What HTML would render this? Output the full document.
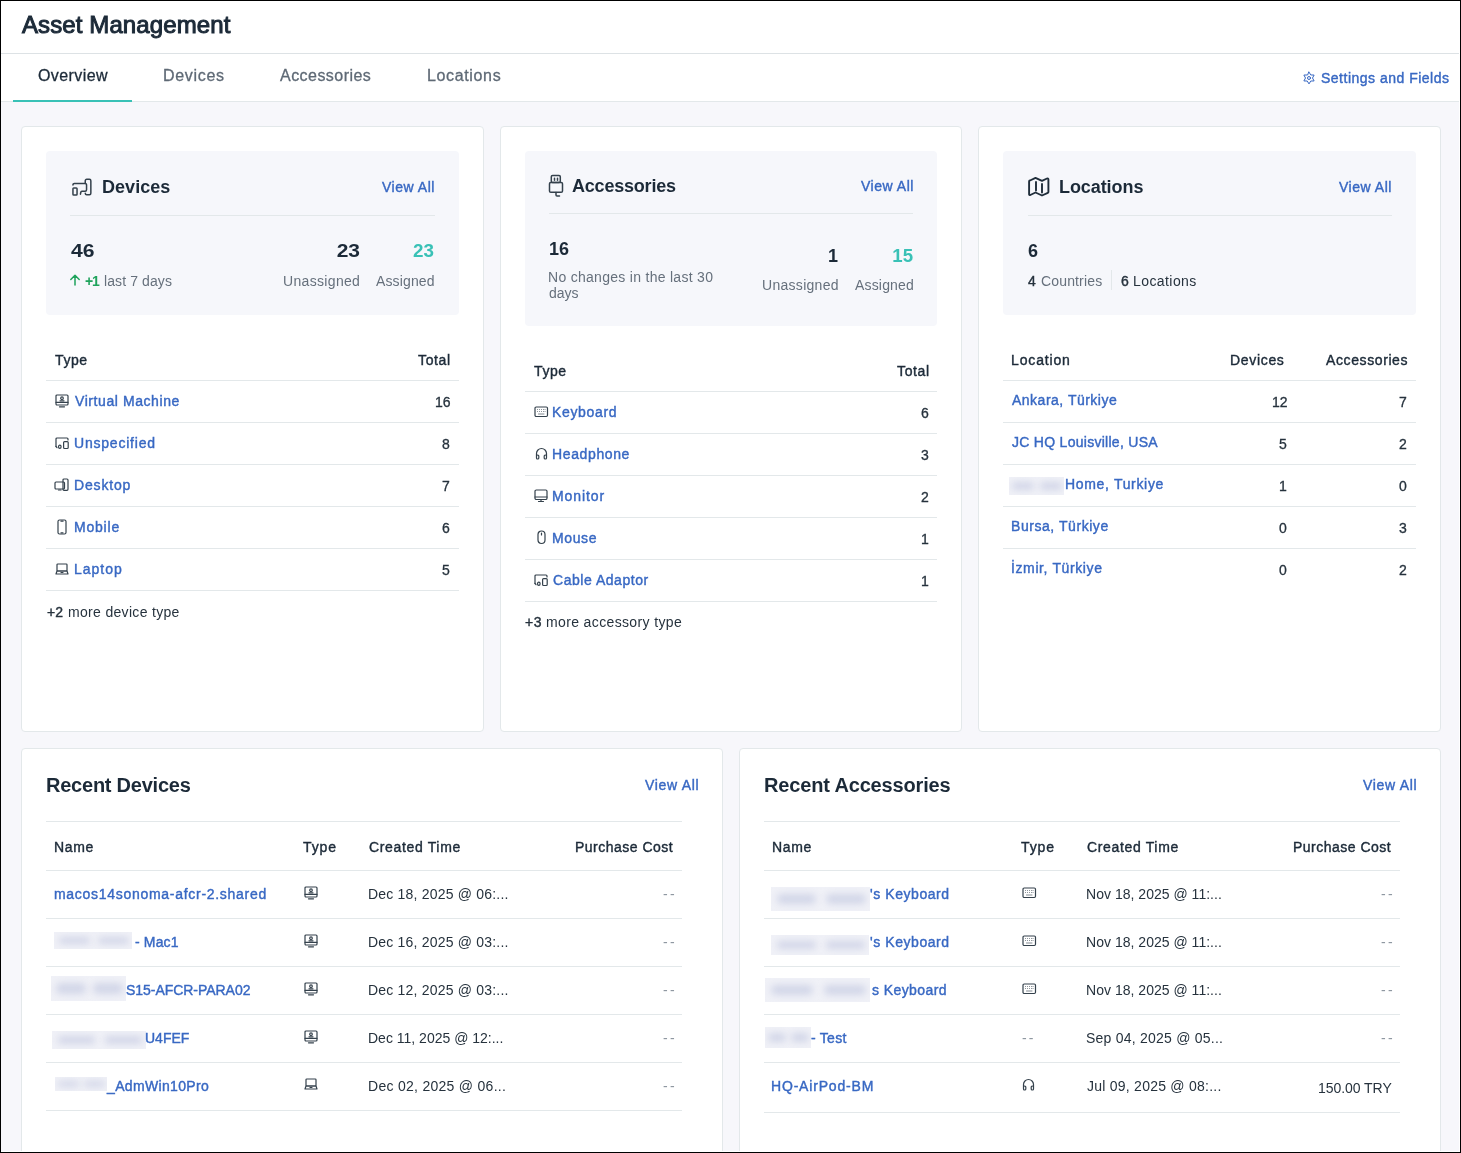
<!DOCTYPE html>
<html><head><meta charset="utf-8"><title>Asset Management</title>
<style>
html,body{margin:0;padding:0;}
body{width:1461px;height:1153px;position:relative;overflow:hidden;background:#f7f7fb;font-family:"Liberation Sans",sans-serif;}
.t{position:absolute;white-space:nowrap;line-height:20px;will-change:transform;}
</style></head><body>
<div style="position:absolute;left:0px;top:0px;width:1461px;height:53px;background:#fff"></div>
<div style="position:absolute;left:0px;top:53px;width:1461px;height:1px;background:#dde2e5"></div>
<div style="position:absolute;left:0px;top:54px;width:1461px;height:47px;background:#fff"></div>
<div style="position:absolute;left:0px;top:101px;width:1461px;height:1px;background:#e3e8ea"></div>
<div style="position:absolute;left:0px;top:102px;width:1461px;height:1051px;background:#f7f7fb"></div>
<div class="t" style="left:22.20px;top:15px;font-size:24px;font-weight:400;color:#1c2a38;-webkit-text-stroke:1.0px #1c2a38;letter-spacing:0.102px;">Asset Management</div>
<div class="t" style="left:37.80px;top:66px;font-size:16px;font-weight:400;color:#1c2a38;-webkit-text-stroke:0.3px #1c2a38;letter-spacing:0.401px;">Overview</div>
<div class="t" style="left:163.20px;top:66px;font-size:16px;font-weight:400;color:#5e6975;-webkit-text-stroke:0.3px #5e6975;letter-spacing:0.675px;">Devices</div>
<div class="t" style="left:280.40px;top:66px;font-size:16px;font-weight:400;color:#5e6975;-webkit-text-stroke:0.3px #5e6975;letter-spacing:0.459px;">Accessories</div>
<div class="t" style="left:427.20px;top:66px;font-size:16px;font-weight:400;color:#5e6975;-webkit-text-stroke:0.3px #5e6975;letter-spacing:0.645px;">Locations</div>
<div style="position:absolute;left:13px;top:100px;width:119px;height:2px;background:#39c1b6"></div>
<svg style="position:absolute;left:1302px;top:71px" width="14" height="14" viewBox="0 0 14 14" fill="none" stroke="#3868c3" stroke-width="1.0" stroke-linecap="round" stroke-linejoin="round"><circle cx="7" cy="7" r="1.5"/><path d="M7.00 1.10 L8.75 3.97 L12.11 4.05 L10.50 7.00 L12.11 9.95 L8.75 10.03 L7.00 12.90 L5.25 10.03 L1.89 9.95 L3.50 7.00 L1.89 4.05 L5.25 3.97z"/></svg>
<div class="t" style="left:1320.70px;top:68px;font-size:14px;font-weight:400;color:#3868c3;-webkit-text-stroke:0.4px #3868c3;letter-spacing:0.495px;">Settings and Fields</div>
<div style="position:absolute;left:21px;top:126px;width:463px;height:606px;background:#fff;border:1px solid #e3e8ea;border-radius:4px;box-sizing:border-box"></div>
<div style="position:absolute;left:500px;top:126px;width:462px;height:606px;background:#fff;border:1px solid #e3e8ea;border-radius:4px;box-sizing:border-box"></div>
<div style="position:absolute;left:978px;top:126px;width:463px;height:606px;background:#fff;border:1px solid #e3e8ea;border-radius:4px;box-sizing:border-box"></div>
<div style="position:absolute;left:46px;top:151px;width:413px;height:164px;background:#f6f7fb;border-radius:4px"></div>
<svg style="position:absolute;left:70px;top:176px" width="24" height="22" viewBox="0 0 24 22" fill="none" stroke="#34414c" stroke-width="1.5" stroke-linecap="round" stroke-linejoin="round"><rect x="2.95" y="12.05" width="4.1" height="6.9" rx="0.8"/><path d="M2.95 9.1V8.9a1.45 1.45 0 0 1 1.45-1.45h10.7a1.45 1.45 0 0 1 1.45 1.45v4.9a1.45 1.45 0 0 1-1.45 1.45h-3.2q-.9 0-1.1 1l-.35 1.9"/><path d="M15.25 7V4.7a1.45 1.45 0 0 1 1.45-1.45h2.7a1.45 1.45 0 0 1 1.45 1.45v12.5a1.45 1.45 0 0 1-1.45 1.45h-2.7a1.45 1.45 0 0 1-1.45-1.45"/></svg>
<div class="t" style="left:101.50px;top:177px;font-size:18px;font-weight:700;color:#1c2a38;letter-spacing:0.045px;">Devices</div>
<div class="t" style="right:1026.11px;top:177px;font-size:14px;font-weight:400;color:#3868c3;-webkit-text-stroke:0.4px #3868c3;letter-spacing:0.515px;">View All</div>
<div style="position:absolute;left:70px;top:215px;width:365px;height:1px;background:#e3e8ea"></div>
<div class="t" style="left:70.70px;top:241px;font-size:18px;font-weight:700;color:#1c2a38;transform:scaleX(1.1757);transform-origin:left center;">46</div>
<svg style="position:absolute;left:69px;top:274px" width="12" height="12" viewBox="0 0 12 12" fill="none" stroke="#1fa35c" stroke-width="1.5" stroke-linecap="round" stroke-linejoin="round"><path d="M6 11V1.5M1.8 5.5 6 1.3l4.2 4.2"/></svg>
<div class="t" style="left:84.70px;top:271px;font-size:14px;font-weight:700;color:#1fa35c;letter-spacing:-1.260px;">+1</div>
<div class="t" style="left:103.50px;top:271px;font-size:14px;font-weight:400;color:#66707c;letter-spacing:0.099px;">last 7 days</div>
<div class="t" style="right:1100.97px;top:241px;font-size:18px;font-weight:700;color:#1c2a38;transform:scaleX(1.1672);transform-origin:right center;">23</div>
<div class="t" style="right:1101.06px;top:271px;font-size:14px;font-weight:400;color:#66707c;letter-spacing:0.330px;">Unassigned</div>
<div class="t" style="right:1026.97px;top:241px;font-size:18px;font-weight:700;color:#39c1b6;transform:scaleX(1.0450);transform-origin:right center;">23</div>
<div class="t" style="right:1026.38px;top:271px;font-size:14px;font-weight:400;color:#66707c;letter-spacing:0.129px;">Assigned</div>
<div class="t" style="left:54.80px;top:350px;font-size:14px;font-weight:400;color:#1c2a38;-webkit-text-stroke:0.4px #1c2a38;letter-spacing:0.600px;">Type</div>
<div class="t" style="right:1010.25px;top:350px;font-size:14px;font-weight:400;color:#1c2a38;-webkit-text-stroke:0.4px #1c2a38;letter-spacing:0.630px;">Total</div>
<div style="position:absolute;left:46px;top:380px;width:413px;height:1px;background:#e3e8ea"></div>
<svg style="position:absolute;left:55px;top:394px" width="14" height="14" viewBox="0 0 14 14" fill="none" stroke="#34414c" stroke-width="1.2" stroke-linecap="round" stroke-linejoin="round"><rect x="1" y="1" width="12" height="10" rx="1"/><path d="M1 8.3h12M4.5 12.8h5"/><circle cx="7" cy="4.2" r="1.3"/><path d="M5 6.8h4"/></svg>
<div class="t" style="left:74.70px;top:391px;font-size:14px;font-weight:400;color:#3868c3;-webkit-text-stroke:0.4px #3868c3;letter-spacing:0.577px;">Virtual Machine</div>
<div class="t" style="right:1010.62px;top:392px;font-size:14px;font-weight:400;color:#26323d;-webkit-text-stroke:0.3px #26323d;">16</div>
<div style="position:absolute;left:46px;top:422px;width:413px;height:1px;background:#e3e8ea"></div>
<svg style="position:absolute;left:55px;top:437px" width="14" height="13" viewBox="0 0 14 13" fill="none" stroke="#34414c" stroke-width="1.2" stroke-linecap="round" stroke-linejoin="round"><path d="M1 9.5V2a1 1 0 0 1 1-1h10a1 1 0 0 1 1 1v1"/><path d="M1 9.5l1 1.2"/><ellipse cx="4.8" cy="9.8" rx="1.3" ry="1.6"/><rect x="8.6" y="4.6" width="4.6" height="6.9" rx="1"/></svg>
<div class="t" style="left:73.70px;top:433px;font-size:14px;font-weight:400;color:#3868c3;-webkit-text-stroke:0.4px #3868c3;letter-spacing:0.783px;">Unspecified</div>
<div class="t" style="right:1011.40px;top:434px;font-size:14px;font-weight:400;color:#26323d;-webkit-text-stroke:0.3px #26323d;">8</div>
<div style="position:absolute;left:46px;top:464px;width:413px;height:1px;background:#e3e8ea"></div>
<svg style="position:absolute;left:54px;top:478px" width="15" height="13" viewBox="0 0 15 13" fill="none" stroke="#34414c" stroke-width="1.2" stroke-linecap="round" stroke-linejoin="round"><rect x="1" y="4" width="9.5" height="7" rx="1"/><path d="M4.5 12h2.5"/><rect x="9" y="1" width="5" height="11.3" rx="1"/></svg>
<div class="t" style="left:73.70px;top:475px;font-size:14px;font-weight:400;color:#3868c3;-webkit-text-stroke:0.4px #3868c3;letter-spacing:0.840px;">Desktop</div>
<div class="t" style="right:1011.40px;top:476px;font-size:14px;font-weight:400;color:#26323d;-webkit-text-stroke:0.3px #26323d;">7</div>
<div style="position:absolute;left:46px;top:506px;width:413px;height:1px;background:#e3e8ea"></div>
<svg style="position:absolute;left:55px;top:519px" width="14" height="16" viewBox="0 0 14 16" fill="none" stroke="#34414c" stroke-width="1.2" stroke-linecap="round" stroke-linejoin="round"><rect x="3" y="1" width="8" height="14" rx="1.5"/><path d="M6 2.2h2M6 13.8h2"/></svg>
<div class="t" style="left:73.70px;top:517px;font-size:14px;font-weight:400;color:#3868c3;-webkit-text-stroke:0.4px #3868c3;letter-spacing:0.792px;">Mobile</div>
<div class="t" style="right:1011.40px;top:518px;font-size:14px;font-weight:400;color:#26323d;-webkit-text-stroke:0.3px #26323d;">6</div>
<div style="position:absolute;left:46px;top:548px;width:413px;height:1px;background:#e3e8ea"></div>
<svg style="position:absolute;left:55px;top:563px" width="14" height="12" viewBox="0 0 14 12" fill="none" stroke="#34414c" stroke-width="1.2" stroke-linecap="round" stroke-linejoin="round"><rect x="2" y="1" width="10" height="7" rx="0.8"/><path d="M1 11l1-3h10l1 3z M6 9.5h2"/></svg>
<div class="t" style="left:73.70px;top:559px;font-size:14px;font-weight:400;color:#3868c3;-webkit-text-stroke:0.4px #3868c3;letter-spacing:0.972px;">Laptop</div>
<div class="t" style="right:1011.40px;top:560px;font-size:14px;font-weight:400;color:#26323d;-webkit-text-stroke:0.3px #26323d;">5</div>
<div style="position:absolute;left:46px;top:590px;width:413px;height:1px;background:#e3e8ea"></div>
<div class="t" style="left:46.70px;top:602px;font-size:14px;font-weight:400;color:#26323d;-webkit-text-stroke:0.4px #26323d;letter-spacing:0.180px;">+2</div>
<div class="t" style="left:67.50px;top:602px;font-size:14px;font-weight:400;color:#26323d;letter-spacing:0.318px;">more device type</div>
<div style="position:absolute;left:525px;top:151px;width:412px;height:175px;background:#f6f7fb;border-radius:4px"></div>
<svg style="position:absolute;left:547px;top:173px" width="18" height="25" viewBox="0 0 18 25" fill="none" stroke="#34414c" stroke-width="1.5" stroke-linecap="round" stroke-linejoin="round"><rect x="4.3" y="2.5" width="9" height="7" rx="1.3"/><path d="M7.5 5.2v2M10.5 5.2v2"/><rect x="2.5" y="9.5" width="13" height="9.8" rx="1.3"/><path d="M9 19.5v2.5a1 1 0 0 0 1 1h2.5"/></svg>
<div class="t" style="left:571.70px;top:176px;font-size:18px;font-weight:700;color:#1c2a38;letter-spacing:-0.207px;">Accessories</div>
<div class="t" style="right:547.11px;top:176px;font-size:14px;font-weight:400;color:#3868c3;-webkit-text-stroke:0.4px #3868c3;letter-spacing:0.515px;">View All</div>
<div style="position:absolute;left:549px;top:213px;width:364px;height:1px;background:#e3e8ea"></div>
<div class="t" style="left:548.50px;top:239px;font-size:18px;font-weight:700;color:#1c2a38;letter-spacing:0.090px;">16</div>
<div class="t" style="left:548.00px;top:267px;font-size:14px;font-weight:400;color:#66707c;letter-spacing:0.290px;">No changes in the last 30</div>
<div class="t" style="left:549.00px;top:283px;font-size:14px;font-weight:400;color:#66707c;">days</div>
<div class="t" style="right:623.38px;top:246px;font-size:18px;font-weight:700;color:#1c2a38;">1</div>
<div class="t" style="right:622.46px;top:275px;font-size:14px;font-weight:400;color:#66707c;letter-spacing:0.290px;">Unassigned</div>
<div class="t" style="right:547.97px;top:246px;font-size:18px;font-weight:700;color:#39c1b6;transform:scaleX(1.0349);transform-origin:right center;">15</div>
<div class="t" style="right:547.30px;top:275px;font-size:14px;font-weight:400;color:#66707c;letter-spacing:0.173px;">Assigned</div>
<div class="t" style="left:533.70px;top:361px;font-size:14px;font-weight:400;color:#1c2a38;-webkit-text-stroke:0.4px #1c2a38;letter-spacing:0.600px;">Type</div>
<div class="t" style="right:531.25px;top:361px;font-size:14px;font-weight:400;color:#1c2a38;-webkit-text-stroke:0.4px #1c2a38;letter-spacing:0.630px;">Total</div>
<div style="position:absolute;left:525px;top:391px;width:412px;height:1px;background:#e3e8ea"></div>
<svg style="position:absolute;left:534px;top:406px" width="15" height="12" viewBox="0 0 15 12" fill="none" stroke="#34414c" stroke-width="1.2" stroke-linecap="round" stroke-linejoin="round"><rect x="1" y="1" width="12.5" height="9.5" rx="1.2"/><path stroke-width="0.9" opacity="0.7" d="M3.5 3.5h.1M5.5 3.5h.1M7.5 3.5h.1M9.5 3.5h.1M11 3.5h.1M3.5 5.5h.1M5.5 5.5h.1M7.5 5.5h.1M9.5 5.5h.1M11 5.5h.1M4.5 8h5.5"/></svg>
<div class="t" style="left:552.30px;top:402px;font-size:14px;font-weight:400;color:#3868c3;-webkit-text-stroke:0.4px #3868c3;letter-spacing:0.656px;">Keyboard</div>
<div class="t" style="right:532.40px;top:403px;font-size:14px;font-weight:400;color:#26323d;-webkit-text-stroke:0.3px #26323d;">6</div>
<div style="position:absolute;left:525px;top:433px;width:412px;height:1px;background:#e3e8ea"></div>
<svg style="position:absolute;left:535px;top:447px" width="13" height="13" viewBox="0 0 13 13" fill="none" stroke="#34414c" stroke-width="1.2" stroke-linecap="round" stroke-linejoin="round"><path d="M1.5 9V6.5a5 5 0 0 1 10 0V9"/><rect x="1.5" y="8" width="2.3" height="4" rx="1"/><rect x="9.2" y="8" width="2.3" height="4" rx="1"/></svg>
<div class="t" style="left:552.30px;top:444px;font-size:14px;font-weight:400;color:#3868c3;-webkit-text-stroke:0.4px #3868c3;letter-spacing:0.626px;">Headphone</div>
<div class="t" style="right:532.40px;top:445px;font-size:14px;font-weight:400;color:#26323d;-webkit-text-stroke:0.3px #26323d;">3</div>
<div style="position:absolute;left:525px;top:475px;width:412px;height:1px;background:#e3e8ea"></div>
<svg style="position:absolute;left:534px;top:489px" width="14" height="14" viewBox="0 0 14 14" fill="none" stroke="#34414c" stroke-width="1.2" stroke-linecap="round" stroke-linejoin="round"><rect x="1" y="1" width="12" height="9.5" rx="1.3"/><path d="M1 8h12M4.5 12.5h5M7 10.5v2"/></svg>
<div class="t" style="left:552.30px;top:486px;font-size:14px;font-weight:400;color:#3868c3;-webkit-text-stroke:0.4px #3868c3;letter-spacing:0.900px;">Monitor</div>
<div class="t" style="right:532.40px;top:487px;font-size:14px;font-weight:400;color:#26323d;-webkit-text-stroke:0.3px #26323d;">2</div>
<div style="position:absolute;left:525px;top:517px;width:412px;height:1px;background:#e3e8ea"></div>
<svg style="position:absolute;left:537px;top:530px" width="9" height="15" viewBox="0 0 9 15" fill="none" stroke="#34414c" stroke-width="1.2" stroke-linecap="round" stroke-linejoin="round"><rect x="1" y="1" width="7" height="12.5" rx="3.5"/><path d="M4.5 3v2"/></svg>
<div class="t" style="left:552.30px;top:528px;font-size:14px;font-weight:400;color:#3868c3;-webkit-text-stroke:0.4px #3868c3;letter-spacing:0.618px;">Mouse</div>
<div class="t" style="right:532.40px;top:529px;font-size:14px;font-weight:400;color:#26323d;-webkit-text-stroke:0.3px #26323d;">1</div>
<div style="position:absolute;left:525px;top:559px;width:412px;height:1px;background:#e3e8ea"></div>
<svg style="position:absolute;left:534px;top:574px" width="14" height="13" viewBox="0 0 14 13" fill="none" stroke="#34414c" stroke-width="1.2" stroke-linecap="round" stroke-linejoin="round"><path d="M1 9.5V2a1 1 0 0 1 1-1h10a1 1 0 0 1 1 1v1"/><path d="M1 9.5l1 1.2"/><ellipse cx="4.8" cy="9.8" rx="1.3" ry="1.6"/><rect x="8.6" y="4.6" width="4.6" height="6.9" rx="1"/></svg>
<div class="t" style="left:553.30px;top:570px;font-size:14px;font-weight:400;color:#3868c3;-webkit-text-stroke:0.4px #3868c3;letter-spacing:0.537px;">Cable Adaptor</div>
<div class="t" style="right:532.40px;top:571px;font-size:14px;font-weight:400;color:#26323d;-webkit-text-stroke:0.3px #26323d;">1</div>
<div style="position:absolute;left:525px;top:601px;width:412px;height:1px;background:#e3e8ea"></div>
<div class="t" style="left:525.20px;top:612px;font-size:14px;font-weight:400;color:#26323d;-webkit-text-stroke:0.4px #26323d;letter-spacing:0.630px;">+3</div>
<div class="t" style="left:546.00px;top:612px;font-size:14px;font-weight:400;color:#26323d;letter-spacing:0.365px;">more accessory type</div>
<div style="position:absolute;left:1003px;top:151px;width:413px;height:164px;background:#f6f7fb;border-radius:4px"></div>
<svg style="position:absolute;left:1027px;top:175px" width="24" height="23" viewBox="0 0 24 23" fill="none" stroke="#1f2d3a" stroke-width="1.9" stroke-linecap="round" stroke-linejoin="round"><path d="M3 5.5l5.5-2.6 6.5 3 5-2.4a1 1 0 0 1 1.4.9v12.5a1 1 0 0 1-.6.9l-5.8 2.7-6.5-3-5.2 2.5a.8.8 0 0 1-1.2-.7V6.5a1 1 0 0 1 .9-1z"/><path d="M9 7v8.5M15 9v8.5"/></svg>
<div class="t" style="left:1058.50px;top:177px;font-size:18px;font-weight:700;color:#1c2a38;letter-spacing:-0.077px;">Locations</div>
<div class="t" style="right:68.71px;top:177px;font-size:14px;font-weight:400;color:#3868c3;-webkit-text-stroke:0.4px #3868c3;letter-spacing:0.515px;">View All</div>
<div style="position:absolute;left:1028px;top:215px;width:364px;height:1px;background:#e3e8ea"></div>
<div class="t" style="left:1028.00px;top:241px;font-size:18px;font-weight:700;color:#1c2a38;">6</div>
<div class="t" style="left:1027.60px;top:271px;font-size:14px;font-weight:400;color:#26323d;-webkit-text-stroke:0.4px #26323d;">4</div>
<div class="t" style="left:1040.90px;top:271px;font-size:14px;font-weight:400;color:#66707c;letter-spacing:0.153px;">Countries</div>
<div style="position:absolute;left:1111px;top:270px;width:1px;height:20px;background:#e3e8ea"></div>
<div class="t" style="left:1120.50px;top:271px;font-size:14px;font-weight:400;color:#26323d;-webkit-text-stroke:0.4px #26323d;">6</div>
<div class="t" style="left:1132.50px;top:271px;font-size:14px;font-weight:400;color:#26323d;letter-spacing:0.420px;">Locations</div>
<div class="t" style="left:1010.60px;top:350px;font-size:14px;font-weight:400;color:#1c2a38;-webkit-text-stroke:0.4px #1c2a38;letter-spacing:0.853px;">Location</div>
<div class="t" style="right:176.50px;top:350px;font-size:14px;font-weight:400;color:#1c2a38;-webkit-text-stroke:0.4px #1c2a38;letter-spacing:0.675px;">Devices</div>
<div class="t" style="right:52.59px;top:350px;font-size:14px;font-weight:400;color:#1c2a38;-webkit-text-stroke:0.4px #1c2a38;letter-spacing:0.603px;">Accessories</div>
<div style="position:absolute;left:1003px;top:380px;width:413px;height:1px;background:#e3e8ea"></div>
<div class="t" style="left:1011.60px;top:390px;font-size:14px;font-weight:400;color:#3868c3;-webkit-text-stroke:0.4px #3868c3;letter-spacing:0.499px;">Ankara, Türkiye</div>
<div class="t" style="right:173.22px;top:392px;font-size:14px;font-weight:400;color:#26323d;-webkit-text-stroke:0.3px #26323d;">12</div>
<div class="t" style="right:53.90px;top:392px;font-size:14px;font-weight:400;color:#26323d;-webkit-text-stroke:0.3px #26323d;">7</div>
<div style="position:absolute;left:1003px;top:422px;width:413px;height:1px;background:#e3e8ea"></div>
<div class="t" style="left:1011.60px;top:432px;font-size:14px;font-weight:400;color:#3868c3;-webkit-text-stroke:0.4px #3868c3;letter-spacing:0.279px;">JC HQ Louisville, USA</div>
<div class="t" style="right:174.00px;top:434px;font-size:14px;font-weight:400;color:#26323d;-webkit-text-stroke:0.3px #26323d;">5</div>
<div class="t" style="right:53.90px;top:434px;font-size:14px;font-weight:400;color:#26323d;-webkit-text-stroke:0.3px #26323d;">2</div>
<div style="position:absolute;left:1003px;top:464px;width:413px;height:1px;background:#e3e8ea"></div>
<div style="position:absolute;left:1009px;top:477px;width:55px;height:18px;overflow:hidden;background:#f0f1f7"><div style="position:absolute;left:3.3px;width:22.0px;top:5.0px;height:7.9px;background:#d2d6e8;filter:blur(3.5px);border-radius:5px"></div><div style="position:absolute;left:30.8px;width:22.0px;top:5.0px;height:7.9px;background:#d2d6e8;filter:blur(3.5px);border-radius:5px"></div></div>
<div class="t" style="left:1065.40px;top:474px;font-size:14px;font-weight:400;color:#3868c3;-webkit-text-stroke:0.4px #3868c3;letter-spacing:0.675px;">Home, Turkiye</div>
<div class="t" style="right:174.00px;top:476px;font-size:14px;font-weight:400;color:#26323d;-webkit-text-stroke:0.3px #26323d;">1</div>
<div class="t" style="right:53.90px;top:476px;font-size:14px;font-weight:400;color:#26323d;-webkit-text-stroke:0.3px #26323d;">0</div>
<div style="position:absolute;left:1003px;top:506px;width:413px;height:1px;background:#e3e8ea"></div>
<div class="t" style="left:1010.60px;top:516px;font-size:14px;font-weight:400;color:#3868c3;-webkit-text-stroke:0.4px #3868c3;letter-spacing:0.554px;">Bursa, Türkiye</div>
<div class="t" style="right:174.00px;top:518px;font-size:14px;font-weight:400;color:#26323d;-webkit-text-stroke:0.3px #26323d;">0</div>
<div class="t" style="right:53.90px;top:518px;font-size:14px;font-weight:400;color:#26323d;-webkit-text-stroke:0.3px #26323d;">3</div>
<div style="position:absolute;left:1003px;top:548px;width:413px;height:1px;background:#e3e8ea"></div>
<div class="t" style="left:1010.60px;top:558px;font-size:14px;font-weight:400;color:#3868c3;-webkit-text-stroke:0.4px #3868c3;letter-spacing:0.614px;">İzmir, Türkiye</div>
<div class="t" style="right:174.00px;top:560px;font-size:14px;font-weight:400;color:#26323d;-webkit-text-stroke:0.3px #26323d;">0</div>
<div class="t" style="right:53.90px;top:560px;font-size:14px;font-weight:400;color:#26323d;-webkit-text-stroke:0.3px #26323d;">2</div>
<div style="position:absolute;left:21px;top:748px;width:702px;height:420px;background:#fff;border:1px solid #e3e8ea;border-radius:4px;box-sizing:border-box"></div>
<div style="position:absolute;left:739px;top:748px;width:702px;height:420px;background:#fff;border:1px solid #e3e8ea;border-radius:4px;box-sizing:border-box"></div>
<div class="t" style="left:45.80px;top:775px;font-size:20px;font-weight:700;color:#1c2a38;letter-spacing:-0.233px;">Recent Devices</div>
<div class="t" style="right:761.82px;top:775px;font-size:14px;font-weight:400;color:#3868c3;-webkit-text-stroke:0.4px #3868c3;letter-spacing:0.687px;">View All</div>
<div style="position:absolute;left:46px;top:821px;width:636px;height:1px;background:#e3e8ea"></div>
<div class="t" style="left:53.70px;top:837px;font-size:14px;font-weight:400;color:#1c2a38;-webkit-text-stroke:0.4px #1c2a38;letter-spacing:0.630px;">Name</div>
<div class="t" style="left:303.00px;top:837px;font-size:14px;font-weight:400;color:#1c2a38;-webkit-text-stroke:0.4px #1c2a38;letter-spacing:0.900px;">Type</div>
<div class="t" style="left:369.00px;top:837px;font-size:14px;font-weight:400;color:#1c2a38;-webkit-text-stroke:0.4px #1c2a38;letter-spacing:0.655px;">Created Time</div>
<div class="t" style="right:787.36px;top:837px;font-size:14px;font-weight:400;color:#1c2a38;-webkit-text-stroke:0.4px #1c2a38;letter-spacing:0.487px;">Purchase Cost</div>
<div style="position:absolute;left:46px;top:870px;width:636px;height:1px;background:#e3e8ea"></div>
<div class="t" style="left:54.40px;top:884px;font-size:14px;font-weight:400;color:#3868c3;-webkit-text-stroke:0.4px #3868c3;letter-spacing:0.710px;">macos14sonoma-afcr-2.shared</div>
<svg style="position:absolute;left:304px;top:886px" width="14" height="14" viewBox="0 0 14 14" fill="none" stroke="#34414c" stroke-width="1.2" stroke-linecap="round" stroke-linejoin="round"><rect x="1" y="1" width="12" height="10" rx="1"/><path d="M1 8.3h12M4.5 12.8h5"/><circle cx="7" cy="4.2" r="1.3"/><path d="M5 6.8h4"/></svg>
<div class="t" style="left:368.00px;top:884px;font-size:14px;font-weight:400;color:#26323d;letter-spacing:0.202px;">Dec 18, 2025 @ 06:...</div>
<div class="t" style="right:784.27px;top:884px;font-size:14px;font-weight:400;color:#8f98a1;letter-spacing:2.250px;">--</div>
<div style="position:absolute;left:46px;top:918px;width:636px;height:1px;background:#e3e8ea"></div>
<div style="position:absolute;left:54px;top:932px;width:78px;height:17px;overflow:hidden;background:#f0f1f7"><div style="position:absolute;left:4.7px;width:31.2px;top:4.8px;height:7.5px;background:#d2d6e8;filter:blur(3.5px);border-radius:5px"></div><div style="position:absolute;left:43.7px;width:31.2px;top:4.8px;height:7.5px;background:#d2d6e8;filter:blur(3.5px);border-radius:5px"></div></div>
<div class="t" style="left:135.20px;top:932px;font-size:14px;font-weight:400;color:#3868c3;-webkit-text-stroke:0.4px #3868c3;letter-spacing:0.144px;">- Mac1</div>
<svg style="position:absolute;left:304px;top:934px" width="14" height="14" viewBox="0 0 14 14" fill="none" stroke="#34414c" stroke-width="1.2" stroke-linecap="round" stroke-linejoin="round"><rect x="1" y="1" width="12" height="10" rx="1"/><path d="M1 8.3h12M4.5 12.8h5"/><circle cx="7" cy="4.2" r="1.3"/><path d="M5 6.8h4"/></svg>
<div class="t" style="left:368.00px;top:932px;font-size:14px;font-weight:400;color:#26323d;letter-spacing:0.202px;">Dec 16, 2025 @ 03:...</div>
<div class="t" style="right:784.27px;top:932px;font-size:14px;font-weight:400;color:#8f98a1;letter-spacing:2.250px;">--</div>
<div style="position:absolute;left:46px;top:966px;width:636px;height:1px;background:#e3e8ea"></div>
<div style="position:absolute;left:51px;top:976px;width:75px;height:25px;overflow:hidden;background:#f0f1f7"><div style="position:absolute;left:4.5px;width:30.0px;top:7.0px;height:11.0px;background:#d2d6e8;filter:blur(3.5px);border-radius:5px"></div><div style="position:absolute;left:42.0px;width:30.0px;top:7.0px;height:11.0px;background:#d2d6e8;filter:blur(3.5px);border-radius:5px"></div></div>
<div class="t" style="left:125.50px;top:980px;font-size:14px;font-weight:400;color:#3868c3;-webkit-text-stroke:0.4px #3868c3;letter-spacing:-0.039px;">S15-AFCR-PARA02</div>
<svg style="position:absolute;left:304px;top:982px" width="14" height="14" viewBox="0 0 14 14" fill="none" stroke="#34414c" stroke-width="1.2" stroke-linecap="round" stroke-linejoin="round"><rect x="1" y="1" width="12" height="10" rx="1"/><path d="M1 8.3h12M4.5 12.8h5"/><circle cx="7" cy="4.2" r="1.3"/><path d="M5 6.8h4"/></svg>
<div class="t" style="left:368.00px;top:980px;font-size:14px;font-weight:400;color:#26323d;letter-spacing:0.202px;">Dec 12, 2025 @ 03:...</div>
<div class="t" style="right:784.27px;top:980px;font-size:14px;font-weight:400;color:#8f98a1;letter-spacing:2.250px;">--</div>
<div style="position:absolute;left:46px;top:1014px;width:636px;height:1px;background:#e3e8ea"></div>
<div style="position:absolute;left:52px;top:1031px;width:94px;height:18px;overflow:hidden;background:#f0f1f7"><div style="position:absolute;left:5.6px;width:37.6px;top:5.0px;height:7.9px;background:#d2d6e8;filter:blur(3.5px);border-radius:5px"></div><div style="position:absolute;left:52.6px;width:37.6px;top:5.0px;height:7.9px;background:#d2d6e8;filter:blur(3.5px);border-radius:5px"></div></div>
<div class="t" style="left:145.40px;top:1028px;font-size:14px;font-weight:400;color:#3868c3;-webkit-text-stroke:0.4px #3868c3;">U4FEF</div>
<svg style="position:absolute;left:304px;top:1030px" width="14" height="14" viewBox="0 0 14 14" fill="none" stroke="#34414c" stroke-width="1.2" stroke-linecap="round" stroke-linejoin="round"><rect x="1" y="1" width="12" height="10" rx="1"/><path d="M1 8.3h12M4.5 12.8h5"/><circle cx="7" cy="4.2" r="1.3"/><path d="M5 6.8h4"/></svg>
<div class="t" style="left:368.00px;top:1028px;font-size:14px;font-weight:400;color:#26323d;">Dec 11, 2025 @ 12:...</div>
<div class="t" style="right:784.27px;top:1028px;font-size:14px;font-weight:400;color:#8f98a1;letter-spacing:2.250px;">--</div>
<div style="position:absolute;left:46px;top:1062px;width:636px;height:1px;background:#e3e8ea"></div>
<div style="position:absolute;left:55px;top:1077px;width:52px;height:14px;overflow:hidden;background:#f0f1f7"><div style="position:absolute;left:3.1px;width:20.8px;top:3.9px;height:6.2px;background:#d2d6e8;filter:blur(3.5px);border-radius:5px"></div><div style="position:absolute;left:29.1px;width:20.8px;top:3.9px;height:6.2px;background:#d2d6e8;filter:blur(3.5px);border-radius:5px"></div></div>
<div class="t" style="left:107.40px;top:1076px;font-size:14px;font-weight:400;color:#3868c3;-webkit-text-stroke:0.4px #3868c3;letter-spacing:0.339px;">_AdmWin10Pro</div>
<svg style="position:absolute;left:304px;top:1078px" width="14" height="12" viewBox="0 0 14 12" fill="none" stroke="#34414c" stroke-width="1.2" stroke-linecap="round" stroke-linejoin="round"><rect x="2" y="1" width="10" height="7" rx="0.8"/><path d="M1 11l1-3h10l1 3z M6 9.5h2"/></svg>
<div class="t" style="left:368.00px;top:1076px;font-size:14px;font-weight:400;color:#26323d;letter-spacing:0.284px;">Dec 02, 2025 @ 06...</div>
<div class="t" style="right:784.27px;top:1076px;font-size:14px;font-weight:400;color:#8f98a1;letter-spacing:2.250px;">--</div>
<div style="position:absolute;left:46px;top:1110px;width:636px;height:1px;background:#e3e8ea"></div>
<div class="t" style="left:763.80px;top:775px;font-size:20px;font-weight:700;color:#1c2a38;letter-spacing:-0.159px;">Recent Accessories</div>
<div class="t" style="right:43.82px;top:775px;font-size:14px;font-weight:400;color:#3868c3;-webkit-text-stroke:0.4px #3868c3;letter-spacing:0.687px;">View All</div>
<div style="position:absolute;left:764px;top:821px;width:636px;height:1px;background:#e3e8ea"></div>
<div class="t" style="left:771.70px;top:837px;font-size:14px;font-weight:400;color:#1c2a38;-webkit-text-stroke:0.4px #1c2a38;letter-spacing:0.630px;">Name</div>
<div class="t" style="left:1021.00px;top:837px;font-size:14px;font-weight:400;color:#1c2a38;-webkit-text-stroke:0.4px #1c2a38;letter-spacing:0.900px;">Type</div>
<div class="t" style="left:1087.00px;top:837px;font-size:14px;font-weight:400;color:#1c2a38;-webkit-text-stroke:0.4px #1c2a38;letter-spacing:0.655px;">Created Time</div>
<div class="t" style="right:69.36px;top:837px;font-size:14px;font-weight:400;color:#1c2a38;-webkit-text-stroke:0.4px #1c2a38;letter-spacing:0.487px;">Purchase Cost</div>
<div style="position:absolute;left:764px;top:870px;width:636px;height:1px;background:#e3e8ea"></div>
<div style="position:absolute;left:771px;top:887px;width:99px;height:24px;overflow:hidden;background:#f0f1f7"><div style="position:absolute;left:5.9px;width:39.6px;top:6.7px;height:10.6px;background:#d2d6e8;filter:blur(3.5px);border-radius:5px"></div><div style="position:absolute;left:55.4px;width:39.6px;top:6.7px;height:10.6px;background:#d2d6e8;filter:blur(3.5px);border-radius:5px"></div></div>
<div class="t" style="left:870.00px;top:884px;font-size:14px;font-weight:400;color:#3868c3;-webkit-text-stroke:0.4px #3868c3;letter-spacing:0.558px;">'s Keyboard</div>
<svg style="position:absolute;left:1022px;top:887px" width="15" height="12" viewBox="0 0 15 12" fill="none" stroke="#34414c" stroke-width="1.2" stroke-linecap="round" stroke-linejoin="round"><rect x="1" y="1" width="12.5" height="9.5" rx="1.2"/><path stroke-width="0.9" opacity="0.7" d="M3.5 3.5h.1M5.5 3.5h.1M7.5 3.5h.1M9.5 3.5h.1M11 3.5h.1M3.5 5.5h.1M5.5 5.5h.1M7.5 5.5h.1M9.5 5.5h.1M11 5.5h.1M4.5 8h5.5"/></svg>
<div class="t" style="left:1086.00px;top:884px;font-size:14px;font-weight:400;color:#26323d;letter-spacing:0.023px;">Nov 18, 2025 @ 11:...</div>
<div class="t" style="right:66.27px;top:884px;font-size:14px;font-weight:400;color:#8f98a1;letter-spacing:2.250px;">--</div>
<div style="position:absolute;left:764px;top:918px;width:636px;height:1px;background:#e3e8ea"></div>
<div style="position:absolute;left:771px;top:935px;width:98px;height:20px;overflow:hidden;background:#f0f1f7"><div style="position:absolute;left:5.9px;width:39.2px;top:5.6px;height:8.8px;background:#d2d6e8;filter:blur(3.5px);border-radius:5px"></div><div style="position:absolute;left:54.9px;width:39.2px;top:5.6px;height:8.8px;background:#d2d6e8;filter:blur(3.5px);border-radius:5px"></div></div>
<div class="t" style="left:870.00px;top:932px;font-size:14px;font-weight:400;color:#3868c3;-webkit-text-stroke:0.4px #3868c3;letter-spacing:0.558px;">'s Keyboard</div>
<svg style="position:absolute;left:1022px;top:935px" width="15" height="12" viewBox="0 0 15 12" fill="none" stroke="#34414c" stroke-width="1.2" stroke-linecap="round" stroke-linejoin="round"><rect x="1" y="1" width="12.5" height="9.5" rx="1.2"/><path stroke-width="0.9" opacity="0.7" d="M3.5 3.5h.1M5.5 3.5h.1M7.5 3.5h.1M9.5 3.5h.1M11 3.5h.1M3.5 5.5h.1M5.5 5.5h.1M7.5 5.5h.1M9.5 5.5h.1M11 5.5h.1M4.5 8h5.5"/></svg>
<div class="t" style="left:1086.00px;top:932px;font-size:14px;font-weight:400;color:#26323d;letter-spacing:0.023px;">Nov 18, 2025 @ 11:...</div>
<div class="t" style="right:66.27px;top:932px;font-size:14px;font-weight:400;color:#8f98a1;letter-spacing:2.250px;">--</div>
<div style="position:absolute;left:764px;top:966px;width:636px;height:1px;background:#e3e8ea"></div>
<div style="position:absolute;left:765px;top:978px;width:105px;height:24px;overflow:hidden;background:#f0f1f7"><div style="position:absolute;left:6.3px;width:42.0px;top:6.7px;height:10.6px;background:#d2d6e8;filter:blur(3.5px);border-radius:5px"></div><div style="position:absolute;left:58.8px;width:42.0px;top:6.7px;height:10.6px;background:#d2d6e8;filter:blur(3.5px);border-radius:5px"></div></div>
<div class="t" style="left:872.00px;top:980px;font-size:14px;font-weight:400;color:#3868c3;-webkit-text-stroke:0.4px #3868c3;letter-spacing:0.410px;">s Keyboard</div>
<svg style="position:absolute;left:1022px;top:983px" width="15" height="12" viewBox="0 0 15 12" fill="none" stroke="#34414c" stroke-width="1.2" stroke-linecap="round" stroke-linejoin="round"><rect x="1" y="1" width="12.5" height="9.5" rx="1.2"/><path stroke-width="0.9" opacity="0.7" d="M3.5 3.5h.1M5.5 3.5h.1M7.5 3.5h.1M9.5 3.5h.1M11 3.5h.1M3.5 5.5h.1M5.5 5.5h.1M7.5 5.5h.1M9.5 5.5h.1M11 5.5h.1M4.5 8h5.5"/></svg>
<div class="t" style="left:1086.00px;top:980px;font-size:14px;font-weight:400;color:#26323d;letter-spacing:0.023px;">Nov 18, 2025 @ 11:...</div>
<div class="t" style="right:66.27px;top:980px;font-size:14px;font-weight:400;color:#8f98a1;letter-spacing:2.250px;">--</div>
<div style="position:absolute;left:764px;top:1014px;width:636px;height:1px;background:#e3e8ea"></div>
<div style="position:absolute;left:765px;top:1027px;width:46px;height:21px;overflow:hidden;background:#f0f1f7"><div style="position:absolute;left:2.8px;width:18.4px;top:5.9px;height:9.2px;background:#d2d6e8;filter:blur(3.5px);border-radius:5px"></div><div style="position:absolute;left:25.8px;width:18.4px;top:5.9px;height:9.2px;background:#d2d6e8;filter:blur(3.5px);border-radius:5px"></div></div>
<div class="t" style="left:811.20px;top:1028px;font-size:14px;font-weight:400;color:#3868c3;-webkit-text-stroke:0.4px #3868c3;letter-spacing:0.270px;">- Test</div>
<div class="t" style="left:1021.60px;top:1028px;font-size:14px;font-weight:400;color:#8f98a1;letter-spacing:2.160px;">--</div>
<div class="t" style="left:1086.00px;top:1028px;font-size:14px;font-weight:400;color:#26323d;letter-spacing:0.236px;">Sep 04, 2025 @ 05...</div>
<div class="t" style="right:66.27px;top:1028px;font-size:14px;font-weight:400;color:#8f98a1;letter-spacing:2.250px;">--</div>
<div style="position:absolute;left:764px;top:1062px;width:636px;height:1px;background:#e3e8ea"></div>
<div class="t" style="left:771.40px;top:1076px;font-size:14px;font-weight:400;color:#3868c3;-webkit-text-stroke:0.4px #3868c3;letter-spacing:0.818px;">HQ-AirPod-BM</div>
<svg style="position:absolute;left:1022px;top:1078px" width="13" height="13" viewBox="0 0 13 13" fill="none" stroke="#34414c" stroke-width="1.2" stroke-linecap="round" stroke-linejoin="round"><path d="M1.5 9V6.5a5 5 0 0 1 10 0V9"/><rect x="1.5" y="8" width="2.3" height="4" rx="1"/><rect x="9.2" y="8" width="2.3" height="4" rx="1"/></svg>
<div class="t" style="left:1087.00px;top:1076px;font-size:14px;font-weight:400;color:#26323d;letter-spacing:0.246px;">Jul 09, 2025 @ 08:...</div>
<div class="t" style="right:69.78px;top:1078px;font-size:14px;font-weight:400;color:#26323d;letter-spacing:-0.050px;">150.00 TRY</div>
<div style="position:absolute;left:764px;top:1112px;width:636px;height:1px;background:#e3e8ea"></div>
<div style="position:absolute;left:1459px;top:0px;width:1px;height:1153px;background:#fff"></div>
<div style="position:absolute;left:0px;top:1151px;width:1461px;height:1px;background:#fff"></div>
<div style="position:absolute;left:0px;top:0px;width:1461px;height:1153px;border:1px solid #000;box-sizing:border-box"></div>
</body></html>
